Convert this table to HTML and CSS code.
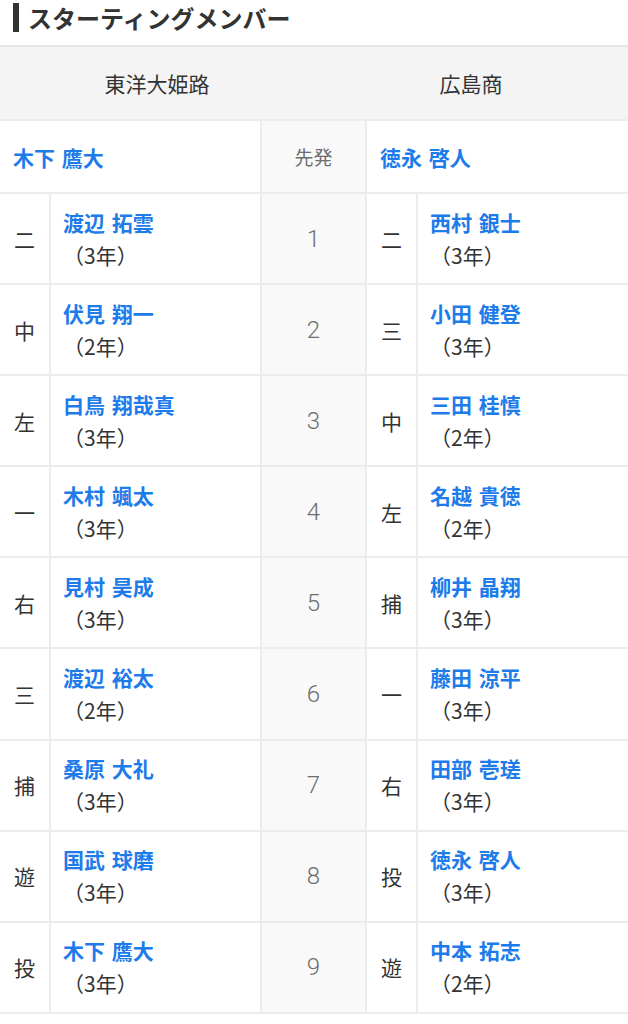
FILE: index.html
```html
<!DOCTYPE html>
<html lang="ja">
<head>
  <meta charset="UTF-8">
  <title>スターティングメンバー</title>
  <link rel="stylesheet" href="styles.css">
</head>
<body>

  <h2 class="section-title">スターティングメンバー</h2>

  <div class="teams">
    <div class="team">東洋大姫路</div>
    <div class="team">広島商</div>
  </div>

  <div class="lineup">
    <div class="cell pitcher wide"><a href="#">木下 鷹大</a></div>
    <div class="cell num label">先発</div>
    <div class="cell pitcher wide"><a href="#">徳永 啓人</a></div>

    <div class="cell pos">二</div>
    <div class="cell player"><a href="#">渡辺 拓雲</a><span>（3年）</span></div>
    <div class="cell num">1</div>
    <div class="cell pos">二</div>
    <div class="cell player"><a href="#">西村 銀士</a><span>（3年）</span></div>

    <div class="cell pos">中</div>
    <div class="cell player"><a href="#">伏見 翔一</a><span>（2年）</span></div>
    <div class="cell num">2</div>
    <div class="cell pos">三</div>
    <div class="cell player"><a href="#">小田 健登</a><span>（3年）</span></div>

    <div class="cell pos">左</div>
    <div class="cell player"><a href="#">白鳥 翔哉真</a><span>（3年）</span></div>
    <div class="cell num">3</div>
    <div class="cell pos">中</div>
    <div class="cell player"><a href="#">三田 桂慎</a><span>（2年）</span></div>

    <div class="cell pos">一</div>
    <div class="cell player"><a href="#">木村 颯太</a><span>（3年）</span></div>
    <div class="cell num">4</div>
    <div class="cell pos">左</div>
    <div class="cell player"><a href="#">名越 貴徳</a><span>（2年）</span></div>

    <div class="cell pos">右</div>
    <div class="cell player"><a href="#">見村 昊成</a><span>（3年）</span></div>
    <div class="cell num">5</div>
    <div class="cell pos">捕</div>
    <div class="cell player"><a href="#">柳井 晶翔</a><span>（3年）</span></div>

    <div class="cell pos">三</div>
    <div class="cell player"><a href="#">渡辺 裕太</a><span>（2年）</span></div>
    <div class="cell num">6</div>
    <div class="cell pos">一</div>
    <div class="cell player"><a href="#">藤田 涼平</a><span>（3年）</span></div>

    <div class="cell pos">捕</div>
    <div class="cell player"><a href="#">桑原 大礼</a><span>（3年）</span></div>
    <div class="cell num">7</div>
    <div class="cell pos">右</div>
    <div class="cell player"><a href="#">田部 壱瑳</a><span>（3年）</span></div>

    <div class="cell pos">遊</div>
    <div class="cell player"><a href="#">国武 球磨</a><span>（3年）</span></div>
    <div class="cell num">8</div>
    <div class="cell pos">投</div>
    <div class="cell player"><a href="#">徳永 啓人</a><span>（3年）</span></div>

    <div class="cell pos">投</div>
    <div class="cell player"><a href="#">木下 鷹大</a><span>（3年）</span></div>
    <div class="cell num">9</div>
    <div class="cell pos">遊</div>
    <div class="cell player"><a href="#">中本 拓志</a><span>（2年）</span></div>
  </div>

</body>
</html>
```

FILE: styles.css
```css
body {
  margin: 0;
  font-family: "Noto Sans CJK JP", "Noto Sans", sans-serif;
  color: #333;
  background: #fff;
}

a {
  color: #1d7bea;
  text-decoration: none;
  font-weight: bold;
  word-spacing: 2px;
}

.section-title {
  display: flex;
  align-items: center;
  gap: 9px;
  height: 45px;
  margin: 0;
  padding: 0 0 10px 13px;
  font-size: 24px;
  line-height: 1;
  font-weight: bold;
  color: #333;
  box-sizing: border-box;
}

.section-title::before {
  content: "";
  display: block;
  width: 6px;
  height: 29px;
  background: #333;
}

.teams {
  display: flex;
  height: 72px;
  background: #f4f4f4;
  border-top: 2px solid #e6e6e6;
}

.team {
  flex: 1;
  display: flex;
  align-items: center;
  justify-content: center;
  font-size: 21px;
}

.lineup {
  display: grid;
  grid-template-columns: 49px 209px 103px 49px 1fr;
  grid-template-rows: 71px;
  grid-auto-rows: 89.1px;
  gap: 2px;
  background: #ececec;
  padding: 2px 0;
}

.cell {
  background: #fff;
  display: flex;
  align-items: center;
  font-size: 21px;
}

.wide {
  grid-column: span 2;
  padding-left: 13px;
}

.pos {
  justify-content: center;
}

.player {
  flex-direction: column;
  align-items: flex-start;
  justify-content: center;
  padding-left: 12px;
  line-height: 33px;
}

.num {
  justify-content: center;
  background: #f9f9f9;
  color: #6e6e6e;
  font-family: Roboto, "Noto Sans CJK JP", sans-serif;
  font-weight: 300;
  font-size: 24px;
}

.num.label {
  font-family: "Noto Sans CJK JP", sans-serif;
  font-weight: normal;
  font-size: 19px;
}
```
